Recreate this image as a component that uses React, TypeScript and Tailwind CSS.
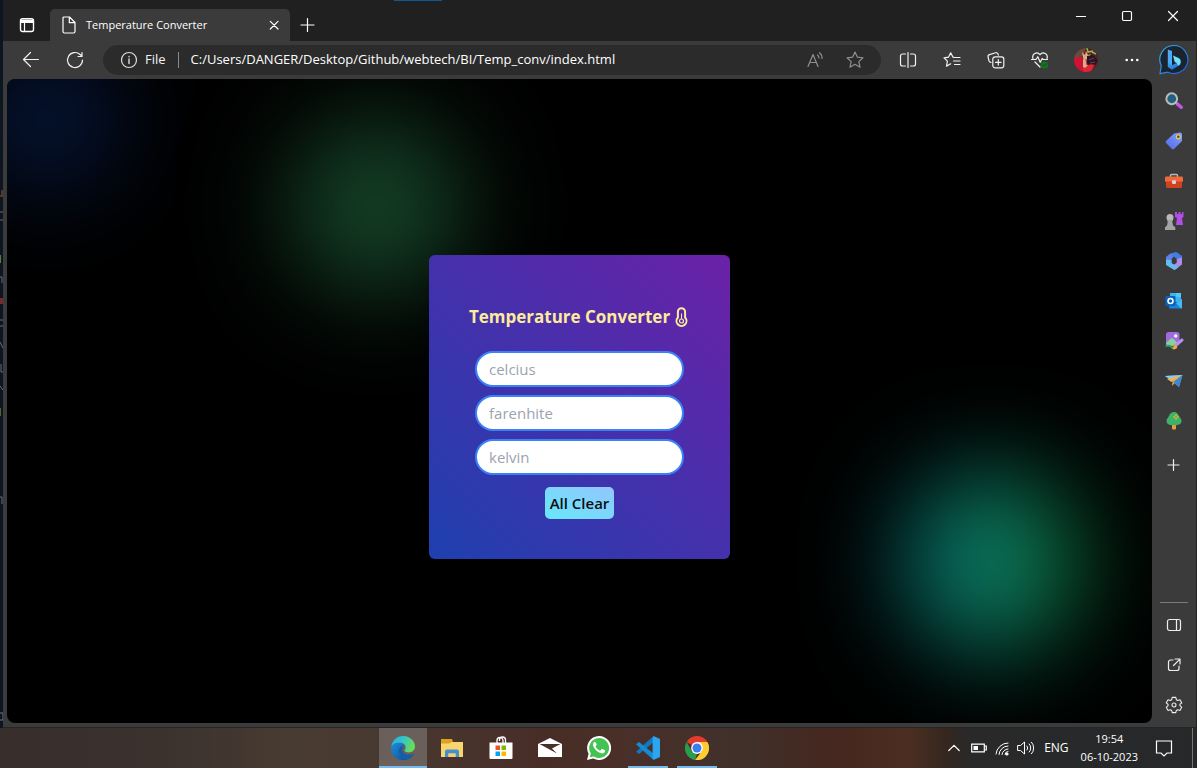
import type { ReactNode } from "react";
import { useState } from "react";

type IconProps = { size?: number; box?: number; children: ReactNode; className?: string };

function Line({ size = 20, box = size, children, className = "" }: IconProps) {
  return (
    <svg
      width={size}
      height={size}
      viewBox={`0 0 ${box} ${box}`}
      fill="none"
      stroke="currentColor"
      strokeWidth="1.2"
      strokeLinecap="round"
      strokeLinejoin="round"
      className={className}
      aria-hidden="true"
    >
      {children}
    </svg>
  );
}

function Art({ size = 20, box = size, children, className = "" }: IconProps) {
  return (
    <svg width={size} height={size} viewBox={`0 0 ${box} ${box}`} className={className} aria-hidden="true">
      {children}
    </svg>
  );
}

const star = "M10 2l2.400 5.200 5.600.6-4.200 3.800 1.200 5.600-5-2.900-5 2.900 1.200-5.600L2 7.800l5.600-.6z";

function TitleBar() {
  return (
    <header className="relative flex h-[41px] shrink-0 bg-[#202020] text-white">
      <div className="absolute top-0 left-[391px] h-px w-12 bg-[#0b5a94]" />
      <button aria-label="Tab actions" className="mt-[9px] flex w-[47px] items-center justify-center">
        <Line size={16}>
          <rect x="1.5" y="1.8" width="13" height="12.7" rx="2" strokeWidth="1.4" />
          <path d="M2 3.3h12v2H2z" fill="currentColor" />
          <path d="M5.5 5v9.500" />
        </Line>
      </button>
      <div className="mt-[9px] flex w-60 items-center rounded-t-[5px] bg-[#3b3b3b] px-2">
        <Line size={20}>
          <path d="M6 2h5.500L17 7.500V16.500A1.500 1.500 0 0 1 15.500 18h-9A1.500 1.500 0 0 1 5 16.500V3a1 1 0 0 1 1-1zM11.300 2.200V7.700h5.500" />
        </Line>
        <span className="ml-2 flex-1 text-[11px]">Temperature Converter</span>
        <button aria-label="Close tab">
          <Line size={16}>
            <path d="M4.300 4.300l7.700 7.700M12 4.300l-7.700 7.700" />
          </Line>
        </button>
      </div>
      <button aria-label="New tab" className="mt-2 ml-2 flex w-5 items-center justify-center">
        <Line size={16}>
          <path d="M7.500 1.500v13M1 8h13" />
        </Line>
      </button>
      <div className="ml-auto flex h-8">
        <button aria-label="Minimize" className="flex w-[46px] items-center justify-center">
          <Line size={12}>
            <path d="M1.500 6.500h9" />
          </Line>
        </button>
        <button aria-label="Maximize" className="flex w-[46px] items-center justify-center">
          <Line size={12}>
            <rect x="1.5" y="1.5" width="9" height="9" rx="1.2" />
          </Line>
        </button>
        <button aria-label="Close" className="flex w-[46px] items-center justify-center">
          <Line size={12}>
            <path d="M1.5 1.5l9 9M10.5 1.5l-9 9" />
          </Line>
        </button>
      </div>
    </header>
  );
}

function ToolButton({ label, children, className = "w-11" }: { label: string; children: ReactNode; className?: string }) {
  return (
    <button aria-label={label} className={`flex h-full items-center justify-center ${className}`}>
      {children}
    </button>
  );
}

function Toolbar() {
  return (
    <div className="flex h-[38px] shrink-0 items-center bg-[#3b3b3b] pl-[6px] text-[#f2f2f2]">
      <ToolButton label="Back">
        <Line size={20}>
          <path d="M17.500 9.500H2.500M9.500 2.500l-7 7 7 7" />
        </Line>
      </ToolButton>
      <ToolButton label="Refresh">
        <Line size={20}>
          <path d="M17.500 10a7.500 7.500 0 1 1-2.400-5.500L17 6.300M17 2.500v4h-4" />
        </Line>
      </ToolButton>
      <div className="ml-[6px] flex h-[30px] flex-1 items-center rounded-full bg-[#2b2b2b] px-4">
        <Line size={20} className="text-[#dedede]">
          <circle cx="10" cy="10" r="7.5" />
          <path d="M10 9v4.500M10 6.500v.2" strokeWidth="1.4" />
        </Line>
        <span className="ml-[6px] text-[13px]">File</span>
        <span className="mx-3 h-4 w-px bg-[#8a8a8a]" />
        <input
          aria-label="Address"
          defaultValue="C:/Users/DANGER/Desktop/Github/webtech/BI/Temp_conv/index.html"
          className="min-w-0 flex-1 bg-transparent text-[13px] text-white outline-none"
        />
        <button aria-label="Read aloud" className="text-[#8f8f8f]">
          <Line size={20}>
            <path d="M3 16.500L8 4.500l5 12M4.700 12.500h6.600M12.500 5a3.500 3.500 0 0 1 1.400 3M14.500 2.800A6.500 6.500 0 0 1 17 8.500" />
          </Line>
        </button>
        <button aria-label="Add to favourites" className="ml-5 text-[#8f8f8f]">
          <Line size={20}>
            <path d={star} />
          </Line>
        </button>
      </div>
      <div className="ml-[5px] flex h-full items-center">
        <ToolButton label="Split screen">
          <Line size={20}>
            <path d="M7.500 4H4.500a2 2 0 0 0-2 2v8a2 2 0 0 0 2 2h3M12.500 4h3a2 2 0 0 1 2 2v8a2 2 0 0 1-2 2h-3M10 2.500v15" />
          </Line>
        </ToolButton>
        <ToolButton label="Favourites">
          <Line size={20}>
            <path d="M12.500 7.500L11 7.200 8.700 2.800 6.500 7.200l-4.500.6 3.400 3.300-.9 5 4.200-2.300M13 7.500h5M11.500 11H18M12.500 14.500H18" />
          </Line>
        </ToolButton>
        <ToolButton label="Collections">
          <Line size={20}>
            <path d="M5 12.500l-.5-.2a2 2 0 0 1-1.600-1.800l-.8-3.500A2 2 0 0 1 3.500 4.600l6-1.800a2 2 0 0 1 2.600 1.400l.2 1" />
            <rect x="6.8" y="6.8" width="11" height="11" rx="2.2" />
            <path d="M12.300 9.500v5.600M9.500 12.300h5.600" />
          </Line>
        </ToolButton>
        <ToolButton label="Browser essentials">
          <Line size={20}>
            <path d="M3 8.500C1.500 4 7 .8 10 4.700 13 .8 18.500 4 17 8.500M1.500 9.500H6l1.800-2.800 2.400 5.600 2-3.800 1 1h4.300M5 12l5 5" />
            <circle cx="14.5" cy="15" r="3.6" fill="#0d7a1a" stroke="none" />
            <path d="M13 15l1.200 1.200 2-2.200" stroke="#2a4a2c" />
          </Line>
        </ToolButton>
        <ToolButton label="Profile" className="w-12">
          <Art size={24}>
            <defs>
              <clipPath id="face">
                <circle cx="12" cy="12" r="12" />
              </clipPath>
            </defs>
            <g clipPath="url(#face)">
              <path d="M0 0h24v24H0z" fill="#5b1c22" />
              <path d="M0 0h12l-3 8-9 4z" fill="#6b4a3c" />
              <path d="M0 10l8-1 4 15H0z" fill="#d01335" />
              <path d="M9 17l12-1-4 8h-8z" fill="#df2434" />
              <path d="M8 4l3 3 1-4 2 4 3-1-3 5 0 6-3 3-2-1V9z" fill="#e0a888" />
              <path d="M13 0l1 4 5-1M18 4l4 2" stroke="#91bb48" strokeWidth="1.5" fill="none" />
              <path d="M13 8l6-1 5 6-3 4-4-1-4 1z" fill="#1d1a27" />
              <path d="M15 12l5-2M16 15l5-1M5 8l4 2-1 5M12 11l1 6" stroke="#a32c3a" fill="none" />
            </g>
          </Art>
        </ToolButton>
        <ToolButton label="Settings and more">
          <Art size={16} className="fill-white">
            <circle cx="2.7" cy="8" r="1.3" />
            <circle cx="8" cy="8" r="1.3" />
            <circle cx="13.3" cy="8" r="1.3" />
          </Art>
        </ToolButton>
        <ToolButton label="Bing chat" className="mr-[2px] w-10">
          <Art size={32}>
            <defs>
              <linearGradient id="bing" x1="0" y1="0" x2="1" y2="1">
                <stop offset="0" stopColor="#35b8e8" />
                <stop offset="1" stopColor="#2257d8" />
              </linearGradient>
            </defs>
            <path d="M16 1.500a14 14 0 1 1-6 26.700l-8 1.500 1.300-8A14 14 0 0 1 16 1.500z" fill="#1b242e" stroke="url(#bing)" strokeWidth="1.2" />
            <path d="M9.800 5.500l4.200 1.600v14l-1 .6-3.200-2.600z" fill="#4ea9f4" />
            <path d="M9.800 19l4.200 2.300 8.500-4.300v3.500L14 25.800 9.800 23z" fill="url(#bing)" />
            <path d="M15 11.500l5.500 2.600q2.600 1.300 2.200 4.400-.5 2.300-2.700 3.300l-1-2.800-2.300-1.100z" fill="#6fe0fb" />
          </Art>
        </ToolButton>
      </div>
    </div>
  );
}

function SideSlot({ label, children }: { label: string; children: ReactNode }) {
  return (
    <button aria-label={label} className="flex h-10 w-full items-center justify-center">
      {children}
    </button>
  );
}

function SideBar() {
  return (
    <aside className="flex w-11 shrink-0 flex-col items-center pt-[2px] pb-[2px] text-[#eeeeee]">
      <SideSlot label="Search">
        <Art size={18} box={20}>
          <path d="M14 13.500l4 3.500" stroke="#c455e8" strokeWidth="3.8" strokeLinecap="round" />
          <path d="M11.500 11.500l2 1.800" stroke="#9a9da2" strokeWidth="2.5" />
          <circle cx="7.5" cy="7.5" r="6" fill="#245f80" stroke="#b9bcc0" strokeWidth="2.2" />
        </Art>
      </SideSlot>
      <SideSlot label="Shopping">
        <Art size={20}>
          <defs>
            <linearGradient id="tag" x1="0" y1="1" x2="1" y2="0">
              <stop offset="0" stopColor="#5566e8" />
              <stop offset="1" stopColor="#7ea6fb" />
            </linearGradient>
          </defs>
          <path d="M10 2.500l6-1q2 0 2 2v6.500l-8 8q-1 .8-2 0l-6-6q-.8-1 0-2z" fill="url(#tag)" />
          <circle cx="14.3" cy="5.7" r="1.9" fill="#474747" stroke="#f5c64a" strokeWidth="1.3" />
        </Art>
      </SideSlot>
      <SideSlot label="Tools">
        <Art size={20}>
          <path d="M6.500 6V4.500q0-1 1-1h5q1 0 1 1V6" fill="none" stroke="#b8b8b8" strokeWidth="1.5" />
          <rect x="1" y="5.5" width="18" height="5.5" rx="1.2" fill="#ef6a3b" />
          <path d="M2 10.500h16V15.500q0 1.500-1.500 1.500h-13Q2 17 2 15.500z" fill="#cf4321" />
          <rect x="8" y="9.3" width="4" height="3.6" rx="1.2" fill="#d8d8d8" />
        </Art>
      </SideSlot>
      <SideSlot label="Games">
        <Art size={20}>
          <path d="M11 1h2v2h1.500V1h2v2H18V1h1.500v5l-1.500 1 1 7h-7l1-7-2-1z" fill="#b24de6" />
          <circle cx="6" cy="6.5" r="3.5" fill="#b9b9b9" />
          <path d="M3 9h6l-.8 1.500.8 4 2.300 1.700V19H1v-2.800l2-1.700.8-4z" fill="#a3a3a3" />
        </Art>
      </SideSlot>
      <SideSlot label="Microsoft 365">
        <Art size={20}>
          <path d="M12.500 1L6 2.700 2 6v7l5.500 2V8.500z" fill="#5d7fe8" />
          <path d="M12.500 1L18 5v7l-5-1.500V8L7.500 4z" fill="#3d7de8" />
          <path d="M18 6.500v7l-7.500 5.500L6 16l6.500-4V8z" fill="#b08ae8" />
          <path d="M2 8.500V14l8.500 5 4-2.500-7-4.500V9z" fill="#61bdf0" />
          <path d="M8 8.500l2.300-1.400 2.200 1.300v2.800l-2.200 1.400L8 11.200z" fill="#3b3b3b" />
        </Art>
      </SideSlot>
      <SideSlot label="Outlook">
        <Art size={20}>
          <path d="M6 2h11v9H6z" fill="#3fb2f2" />
          <path d="M12 2h5v4h-5z" fill="#52c9fb" />
          <path d="M5 9l7 3 6-4v8.500q0 1-1 1H6q-1 0-1-1z" fill="#1886d8" />
          <path d="M12 12l6-4v8.500q0 1-1 1z" fill="#43b9f5" />
          <rect x="1.5" y="5" width="10" height="10" rx="1" fill="#0763bd" />
          <circle cx="6.5" cy="10" r="2.5" fill="none" stroke="#fff" strokeWidth="1.5" />
        </Art>
      </SideSlot>
      <SideSlot label="Image creator">
        <Art size={20}>
          <rect x="2" y="1" width="13.5" height="13.5" rx="2.5" fill="#a06bdc" />
          <path d="M2 12l5-4.500q1-.7 2 0l4.500 4.500L9 15H4q-2-.500-2-3z" fill="#8bd09a" />
          <circle cx="11.7" cy="4.9" r="1.7" fill="#fff" />
          <path d="M1.500 15q5-1 6 1t3 1.500" stroke="#2e9b63" strokeWidth="2" fill="none" />
          <path d="M12 14l6-5" stroke="#b590f0" strokeWidth="3" strokeLinecap="round" />
          <path d="M8.500 18q1-4.500 3.500-4l1.500 2q-1 3-5 2z" fill="#f4a83a" />
        </Art>
      </SideSlot>
      <SideSlot label="Drop">
        <Art size={20}>
          <path d="M1 5L18.500 4 15 16l-6-5z" fill="#57aef0" />
          <path d="M1 5L18.500 4 8 9.500z" fill="#8bcaf8" />
          <path d="M3 8L18.500 4 7.500 11z" fill="#f3b64d" />
          <path d="M18.500 4L8.500 11 8 15z" fill="#e8a33a" />
          <path d="M18.500 4L9.500 11l5.500 5z" fill="#3d87d5" />
        </Art>
      </SideSlot>
      <SideSlot label="Tree">
        <Art size={20}>
          <path d="M8 13h4v4.500q0 1-1 1H9q-1 0-1-1z" fill="#f09b38" />
          <path d="M10 1c3 0 4.500 2.500 5.500 5 2 2 2.500 4 1.500 6-1 2-4 2.200-7 2.200S4 14 3 12 2.500 8 4.500 6C5.500 3.500 7 1 10 1z" fill="#3db36a" />
          <path d="M12 2.500l1.200 2.300L15.500 6l-2.300 1.200L12 9.500l-1.200-2.300L8.500 6l2.300-1.200z" fill="#d3b62d" />
          <circle cx="12" cy="6" r="1" fill="#3db36a" />
        </Art>
      </SideSlot>
      <button aria-label="Customize" className="flex h-12 w-full items-center justify-center">
        <Line size={14}>
          <path d="M6.500 1.500v11M1 7h11" />
        </Line>
      </button>
      <div className="mt-auto h-px w-7 bg-[#7a7a7a]" />
      <div className="mt-[2px] flex w-full flex-col">
        <SideSlot label="Hide sidebar">
          <Line size={16}>
            <rect x="1.5" y="2.5" width="13" height="11" rx="2" />
            <path d="M10.500 2.500v11" />
          </Line>
        </SideSlot>
        <SideSlot label="Open link externally">
          <Line size={16}>
            <path d="M7 3H4.500a2 2 0 0 0-2 2v6.500a2 2 0 0 0 2 2H11a2 2 0 0 0 2-2V9M9 2h5v5M13.700 2.300L7.500 8.500" />
          </Line>
        </SideSlot>
        <SideSlot label="Settings">
          <Line size={18} box={20}>
            <path d="M8 1.500h4l.6 2.600 1.500.8 2.500-.8 2 3.400-2 1.800v1.500l2 1.800-2 3.400-2.500-.8-1.500.8-.6 2.500H8l-.6-2.500-1.500-.8-2.500.8-2-3.400 2-1.800V9.300l-2-1.800 2-3.400 2.500.8 1.500-.8z" />
            <circle cx="10" cy="10" r="2.2" />
          </Line>
        </SideSlot>
      </div>
    </aside>
  );
}

function Converter() {
  const [values, setValues] = useState({ celcius: "", farenhite: "", kelvin: "" });
  const names = ["celcius", "farenhite", "kelvin"] as const;

  function convert(name: (typeof names)[number], text: string) {
    const n = parseFloat(text);
    if (Number.isNaN(n)) {
      setValues({ celcius: "", farenhite: "", kelvin: "", [name]: text });
      return;
    }
    const c = name === "celcius" ? n : name === "farenhite" ? ((n - 32) * 5) / 9 : n - 273.15;
    const round = (v: number) => String(Math.round(v * 100) / 100);
    setValues({ celcius: round(c), farenhite: round((c * 9) / 5 + 32), kelvin: round(c + 273.15), [name]: text });
  }

  return (
    <section className="relative flex flex-col items-center rounded-md bg-[linear-gradient(to_top_right,#1e40af,#6b21a8)] p-10">
      <h1 className="mt-2 flex h-7 items-center gap-1 text-[17px] font-bold text-[#fdeb9c]">
        Temperature Converter
        <svg width="16" height="20" viewBox="0 0 16 20" fill="none" stroke="currentColor" aria-hidden="true">
          <path d="M3.900 10.500V4.800a3.600 3.600 0 0 1 7.200 0v5.700a5 5 0 1 1-7.200 0z" strokeWidth="2" />
          <path d="M7.500 6.500v6" strokeWidth="1" />
          <circle cx="7.5" cy="14" r="2" fill="#4b2fa8" strokeWidth="1.2" />
        </svg>
      </h1>
      <div className="mt-5 flex flex-col gap-2">
        {names.map((name) => (
          <input
            key={name}
            aria-label={name}
            placeholder={name}
            value={values[name]}
            onChange={(e) => convert(name, e.target.value)}
            className="h-9 w-[209px] rounded-full border-2 border-[#3b82f6] bg-white px-3 text-[15px] text-black outline-none placeholder:text-[#9ca3af]"
          />
        ))}
      </div>
      <button
        onClick={() => setValues({ celcius: "", farenhite: "", kelvin: "" })}
        className="mt-3 h-8 rounded-[5px] bg-[linear-gradient(to_top_right,#67e8f9,#93c5fd)] px-[5px] text-[15px] font-semibold text-[#0b0f14]"
      >
        All Clear
      </button>
    </section>
  );
}

function Page() {
  return (
    <main className="relative mb-1 flex min-w-0 flex-1 items-center justify-center overflow-hidden rounded-lg bg-black pt-3">
      <div className="absolute -top-8 -left-8 size-36 rounded-full bg-[#061639] blur-[48px]" />
      <div className="absolute top-[38px] left-[280px] size-[178px] rounded-full bg-[#164428] blur-[50px]" />
      <div className="absolute right-[70px] bottom-[71px] size-[180px] rounded-full bg-[linear-gradient(to_right,#04707e,#0c8064,#0c7030)] blur-[50px]" />
      <Converter />
    </main>
  );
}

function EditorEdge() {
  return (
    <div className="w-[3px] shrink-0 overflow-hidden bg-[#0d1521]">
      <svg width="3" height="728" viewBox="0 0 3 728" fill="none" className="opacity-80" aria-hidden="true">
        <path d="M0 196h3M2 190v5" stroke="#b06a3c" />
        <path d="M0 212h3M0 220h3" stroke="#777f8a" />
        <path d="M0 255h1v8H0z" fill="#5f9a4a" />
        <path d="M0 277h2v6M0 320h3M0 326h3M0 342l3 6M1 364v8h2M0 386l3 4M0 497h2v7" stroke="#7d8592" />
        <path d="M0 298h3v6H0z" fill="#8c3230" />
        <path d="M0 408h1v8H0z" fill="#5d7a2f" />
        <path d="M0 713h3v7H0" stroke="#8b8f98" />
      </svg>
    </div>
  );
}

function TaskItem({ label, bar = "", children }: { label: string; bar?: string; children: ReactNode }) {
  return (
    <button aria-label={label} className={`flex w-12 flex-col items-center ${bar === "full" ? "bg-[#6a5f5b]" : ""}`}>
      <span className="flex h-[38px] items-center pt-[2px]">{children}</span>
      <span className={`h-[2px] ${bar === "full" ? "w-12 bg-[#76b9ed]" : bar === "short" ? "w-10 bg-[#76b9ed]" : ""}`} />
    </button>
  );
}

function TaskBar() {
  return (
    <footer className="flex h-10 shrink-0 bg-[linear-gradient(to_right,#382f2d_0%,#3b322e_14%,#483b31_24%,#483830_34%,#482d27_45%,#4a2f29_52%,#40302a_62%,#46271f_70%,#4b2e21_76%,#35271f_79%,#29292a_81%,#262829_100%)] text-white">
      <div className="flex-[378]" />
      <nav className="flex gap-px">
        <TaskItem label="Microsoft Edge" bar="full">
          <Art size={24}>
            <defs>
              <linearGradient id="edgeTop" x1="0" y1="0" x2="1" y2="0.3">
                <stop offset="0" stopColor="#2aa9e0" />
                <stop offset="0.5" stopColor="#31c5d0" />
                <stop offset="1" stopColor="#66db5a" />
              </linearGradient>
              <linearGradient id="edgeLow" x1="0" y1="0" x2="1" y2="1">
                <stop offset="0" stopColor="#1b8fdc" />
                <stop offset="1" stopColor="#0f4f9c" />
              </linearGradient>
            </defs>
            <path d="M.2 11C1 4.500 5.800 0 12 0c7 0 12 5 12 10.600 0 3.600-2.800 5.900-6 5.900-3 0-4.500-1.100-4.500-2 0-.5 1.200-1.200 1.200-3 0-2.700-2.500-4.800-6-4.800C4.500 6.700 1.500 8.500.2 11z" fill="url(#edgeTop)" />
            <path d="M.2 11C1.500 8.200 4.700 6.700 8.200 6.700c3 0 5.200 1.300 6.200 3.300-1-.5-2-.6-3-.2C8.500 11 7 14 8.300 17.500c1.500 3.800 5 5.800 8.500 6-1.500.5-3 .6-4.800.6C5 24-.5 18 .2 11z" fill="url(#edgeLow)" />
            <path d="M11.400 9.800C8.500 11 7 14 8.300 17.500 10 22 14 23.700 17 23.300c2.400-1 4.500-2.700 5.600-4.900.2-.5-.2-.7-.6-.5-5.500 2.500-10.700-.2-10.700-4.300 0-1.500.6-2.600 1.300-3.300.5-.5-.5-.8-1.200-.5z" fill="#145ea8" />
          </Art>
        </TaskItem>
        <TaskItem label="File Explorer">
          <Art size={22}>
            <path d="M0 3h8l2 2h12V20H0z" fill="#f9d56d" />
            <path d="M0 2h11l1 2.500L8 6.500H0z" fill="#dba321" />
            <path d="M4 20v-5.500q0-2 2-2h10q2 0 2 2V20h-3.500v-3.500h-7V20z" fill="#4190cf" />
            <path d="M7.500 16.500h7V20h-7z" fill="#f4cf76" />
          </Art>
        </TaskItem>
        <TaskItem label="Microsoft Store">
          <Art size={24}>
            <path d="M8 7V4.500a3 3 0 0 1 6 0V7M10.500 5V4a3 3 0 0 1 6 0v3" stroke="#fff" strokeWidth="1.3" fill="none" />
            <path d="M.5 6.500h23V22q0 1-1 1h-21q-1 0-1-1z" fill="#fff" />
            <path d="M6.500 9.500H11V14H6.500z" fill="#f25022" />
            <path d="M12.500 9.500H17V14h-4.500z" fill="#7fba00" />
            <path d="M6.500 15.500H11V20H6.500z" fill="#00a4ef" />
            <path d="M12.500 15.500H17V20h-4.500z" fill="#ffb900" />
          </Art>
        </TaskItem>
        <TaskItem label="Mail">
          <Art size={24}>
            <path d="M0 8l12-6 12 6v13H0z" fill="#fff" />
            <path d="M1.500 8h21l-8.500 4.500 5 5z" fill="#4a302a" />
          </Art>
        </TaskItem>
        <TaskItem label="WhatsApp">
          <Art size={24}>
            <path d="M12 0a12 12 0 1 1-5.700 22.500L0 24l1.600-6.200A12 12 0 0 1 12 0z" fill="#fff" />
            <path d="M12 2a10 10 0 1 1-5.200 18.500L2.800 21.300l1-3.900A10 10 0 0 1 12 2z" fill="#44c353" />
            <path d="M8.600 6.500c-.3-.7-.8-.7-1.300-.6C6 6.700 5.700 8.300 6.200 9.800c1.200 3.500 4.500 6.700 8.200 7.500 1.700.4 3.500-.7 3.700-2.400 0-.5-.1-.6-.5-.8l-2.200-1.100c-.4-.2-.7-.1-1 .3l-.9 1.100c-.3.300-.5.300-.9.100-1.800-.9-3-2-3.900-3.700-.2-.4-.1-.6.100-.9l.7-.9c.2-.3.200-.6.100-.9z" fill="#fff" />
          </Art>
        </TaskItem>
        <TaskItem label="Visual Studio Code" bar="short">
          <Art size={24}>
            <path d="M17.500 0v6.500L3 18 0 15.700z" fill="#1277bd" />
            <path d="M3 6L17.500 17.500V24L0 8.300z" fill="#168bd3" />
            <path d="M17.500 0L24 3v18l-6.500 3-.9-2V2z" fill="#2aa5ee" />
          </Art>
        </TaskItem>
        <TaskItem label="Google Chrome" bar="short">
          <Art size={24}>
            <path d="M12 12L1.600 6A12 12 0 0 1 22.400 6z" fill="#e33b2e" />
            <path d="M1.600 6L7 15.500l5 2.500-2 6A12 12 0 0 1 1.600 6z" fill="#2a9d4c" />
            <path d="M12 6h10.400A12 12 0 0 1 10 23.900L17 15z" fill="#fccc31" />
            <circle cx="12" cy="12" r="5.9" fill="#fff" />
            <circle cx="12" cy="12" r="4.5" fill="#3b7ded" />
          </Art>
        </TaskItem>
      </nav>
      <div className="flex-[223]" />
      <div className="flex items-center">
        <button aria-label="Show hidden icons" className="flex w-5 justify-center">
          <Line size={12}>
            <path d="M.8 8.500L6 3.300l5.200 5.200" />
          </Line>
        </button>
        <Art size={16} className="ml-[7px]">
          <path d="M.7 4.200h12.600v7.600H.7zM13.500 6h1.800v4h-1.800" fill="none" stroke="#fff" strokeWidth="1.2" />
          <path d="M2.500 6H7v4H2.500z" fill="#fff" />
        </Art>
        <Line size={16} className="ml-[7px]">
          <path d="M2 14A12 12 0 0 1 14 3M5 14.500A9 9 0 0 1 14 6M8 14.500A6 6 0 0 1 14 9M11 14.500a3 3 0 0 1 3-3" strokeWidth="1" />
          <circle cx="13" cy="14" r="1" fill="currentColor" />
        </Line>
        <Line size={18} className="ml-[7px]">
          <path d="M1 6.500h2.500L7.500 3v12l-4-3.500H1zM10 7a3 3 0 0 1 0 4M12.300 5a6 6 0 0 1 0 8M14.500 3.200a8.500 8.500 0 0 1 0 11.600" strokeWidth="1" />
        </Line>
        <span className="ml-[9px] text-[12px]">ENG</span>
        <div className="ml-3 flex flex-col items-center text-[11px] leading-[18px]">
          <span>19:54</span>
          <span>06-10-2023</span>
        </div>
        <button aria-label="Notifications" className="ml-4 flex w-5 justify-center">
          <Line size={18}>
            <path d="M1.500 2h15v12H12l-3 3-3-3H1.500z" strokeLinejoin="miter" />
          </Line>
        </button>
        <div className="mr-1 ml-[18px] h-10 w-px bg-[#777777]" />
      </div>
    </footer>
  );
}

export default function App() {
  return (
    <div className="flex h-screen flex-col overflow-hidden bg-[#1d2326] font-['Open_Sans','Noto_Sans',sans-serif]">
      <div className="flex min-h-0 flex-1">
        <EditorEdge />
        <div className="mr-px flex min-w-0 flex-1 flex-col bg-[#3b3b3b]">
          <TitleBar />
          <Toolbar />
          <div className="flex min-h-0 flex-1 pl-1">
            <Page />
            <SideBar />
          </div>
          <div className="h-px shrink-0 bg-[#252525]" />
        </div>
      </div>
      <TaskBar />
    </div>
  );
}
